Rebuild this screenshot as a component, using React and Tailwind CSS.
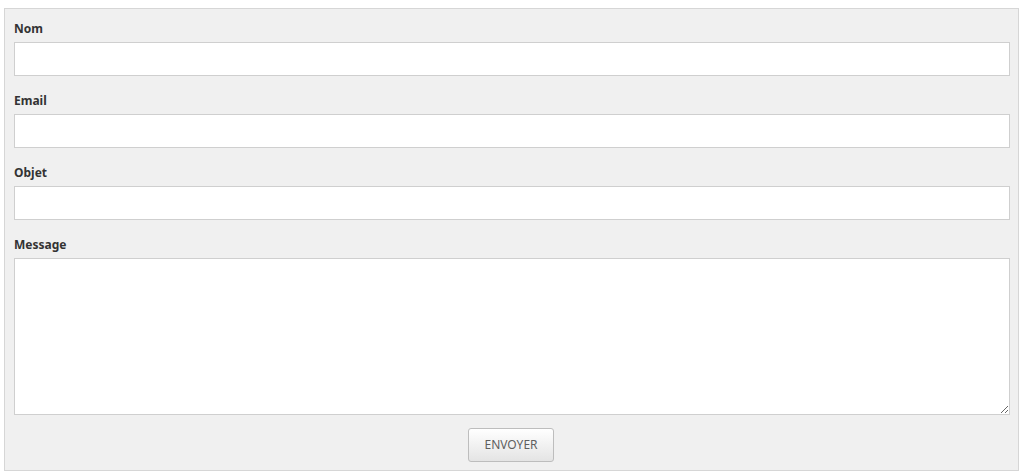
import React from "react";

function Field({ label, children }) {
  return (
    <div className="flex flex-col">
      <label className="h-5 mb-1 pt-px text-[12px] leading-5 font-bold text-[#333]">{label}</label>
      {children}
    </div>
  );
}

export default function App() {
  return (
    <div className="pt-2 pl-1 w-[1024px] h-[476px] bg-white" style={{ fontFamily: '"Noto Sans", "Open Sans", sans-serif' }}>
      <form className="w-[1015px] h-[463px] border border-[#d6d6d6] bg-[#f0f0f0] pt-[9px] pl-[9px] flex flex-col">
        <div className="flex flex-col gap-[14px]">
          <Field label="Nom">
            <input className="w-[996px] h-[34px] bg-white border border-[#cfcfcf] outline-none" />
          </Field>
          <Field label="Email">
            <input className="w-[996px] h-[34px] bg-white border border-[#cfcfcf] outline-none" />
          </Field>
          <Field label="Objet">
            <input className="w-[996px] h-[34px] bg-white border border-[#cfcfcf] outline-none" />
          </Field>
          <Field label="Message">
            <textarea className="w-[996px] h-[157px] bg-white border border-[#cfcfcf] outline-none block" />
          </Field>
        </div>
        <div className="w-[994px] flex justify-center mt-[13px]">
          <button
            type="button"
            className="w-[86px] h-[34px] border border-[#bdbdbd] rounded-[3px] bg-gradient-to-b from-white to-[#e4e4e4] text-[12px] text-[#5f5f5f] uppercase"
          >
            Envoyer
          </button>
        </div>
      </form>
    </div>
  );
}
